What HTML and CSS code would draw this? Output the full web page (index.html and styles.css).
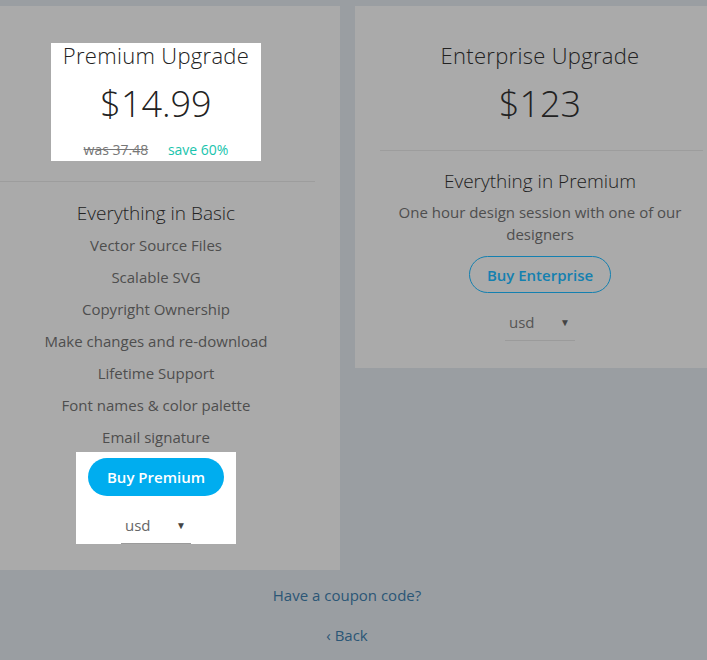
FILE: index.html
```html
<html>
    <head>
        <meta charset="utf-8">
        <title>Upgrade</title>
        <link rel="stylesheet" href="styles.css">
    </head>
    <body>
        <div id="plans">
            <div class="plan plan-premium">
                <div class="plan-head spotlight">
                    <div class="plan-title">Premium Upgrade</div>
                    <div class="plan-price">$14.99</div>
                    <div class="plan-savings">
                        <span class="was">was 37.48</span>
                        <span class="save">save 60%</span>
                    </div>
                </div>
                <hr class="divider">
                <div class="plan-subtitle">Everything in Basic</div>
                <ul class="features">
                    <li>Vector Source Files</li>
                    <li>Scalable SVG</li>
                    <li>Copyright Ownership</li>
                    <li>Make changes and re-download</li>
                    <li>Lifetime Support</li>
                    <li>Font names &amp; color palette</li>
                    <li>Email signature</li>
                </ul>
                <div class="plan-buy spotlight">
                    <button class="btn btn-solid">Buy Premium</button>
                    <div class="currency">
                        <span>usd</span>
                        <span class="caret">&#9660;</span>
                    </div>
                </div>
            </div>
            <div class="plan plan-enterprise">
                <div class="plan-head">
                    <div class="plan-title">Enterprise Upgrade</div>
                    <div class="plan-price">$123</div>
                </div>
                <hr class="divider">
                <div class="plan-subtitle">Everything in Premium</div>
                <p class="plan-desc">One hour design session with one of our designers</p>
                <div class="plan-buy">
                    <button class="btn btn-outline">Buy Enterprise</button>
                    <div class="currency">
                        <span>usd</span>
                        <span class="caret">&#9660;</span>
                    </div>
                </div>
            </div>
        </div>
        <div id="footer">
            <a class="link" href="#">Have a coupon code?</a>
            <a class="link back" href="#">&lsaquo; Back</a>
        </div>
    </body>
</html>
```

FILE: styles.css
```css
body {
    margin: 0;
    background: #9a9ea2;
    font-family: "Open Sans", "Noto Sans", sans-serif;
    color: #222;
    overflow: hidden;
}

#plans {
    display: flex;
    align-items: flex-start;
    gap: 15px;
    padding-top: 6px;
}

.plan {
    background: #aaaaaa;
    text-align: center;
    display: flex;
    flex-direction: column;
    align-items: center;
}
.plan-premium {
    width: 340px;
    padding: 37px 28px 26px 0;
    box-sizing: border-box;
}
.plan-enterprise {
    flex: 1;
    padding: 36px 7px 27px 25px;
}

.spotlight {
    background: #fff;
}

.plan-head {
    display: flex;
    flex-direction: column;
    align-items: center;
    padding: 0 12px 1px;
}
.plan-premium .plan-title {
    margin-top: -1px;
}
.plan-title {
    font-size: 22px;
    font-weight: 300;
    line-height: 26px;
    letter-spacing: 0.3px;
}
.plan-price {
    font-size: 36px;
    font-weight: 300;
    line-height: 44px;
    margin-top: 14px;
}
.plan-savings {
    font-size: 14px;
    line-height: 20px;
    margin-top: 14px;
}
.was {
    color: #777;
    text-decoration: line-through;
    margin-right: 16px;
}
.save {
    color: #19c4ad;
}

.divider {
    align-self: stretch;
    border: 0;
    border-top: 1px solid #9d9d9d;
    margin: 20px -3px 0 0;
}
.plan-enterprise .divider {
    margin-top: 23px;
}

.plan-subtitle {
    font-size: 19px;
    font-weight: 300;
    line-height: 26px;
    margin-top: 17px;
}
.plan-premium .plan-subtitle {
    margin-top: 18px;
}

.features {
    list-style: none;
    margin: 3px 0 0;
    padding: 0;
    color: #4e4e4e;
    font-size: 15px;
    line-height: 32px;
}

.plan-desc {
    max-width: 300px;
    margin: 7px 0 0;
    color: #4e4e4e;
    font-size: 15px;
    line-height: 22px;
}

.plan-buy {
    display: flex;
    flex-direction: column;
    align-items: center;
    width: 160px;
    margin-top: -1px;
}
.plan-enterprise .plan-buy {
    margin-top: 11px;
}
.plan-premium .plan-buy {
    padding-top: 6px;
}

.btn {
    font-family: inherit;
    font-size: 15px;
    font-weight: 600;
    border-radius: 20px;
    height: 38px;
    cursor: pointer;
}
.btn-solid {
    width: 136px;
    border: 0;
    background: #00adef;
    color: #fff;
}
.btn-outline {
    width: 142px;
    height: 37px;
    border: 1px solid #1480b0;
    background: transparent;
    color: #1480b0;
}

.currency {
    display: flex;
    justify-content: space-between;
    align-items: center;
    width: 70px;
    height: 38px;
    margin-top: 10px;
    padding: 0 5px 0 4px;
    box-sizing: border-box;
    border-bottom: 1px solid #9b9b9b;
    font-size: 15px;
    color: #666;
}
.plan-enterprise .currency {
    color: #555;
    margin-top: 10px;
}
.caret {
    font-size: 10px;
    color: #444;
}

#footer {
    display: flex;
    flex-direction: column;
    align-items: center;
    padding: 15px 13px 0 0;
    gap: 20px;
}
.link {
    color: #2b5676;
    text-decoration: none;
    font-size: 15px;
    line-height: 20px;
}
```
